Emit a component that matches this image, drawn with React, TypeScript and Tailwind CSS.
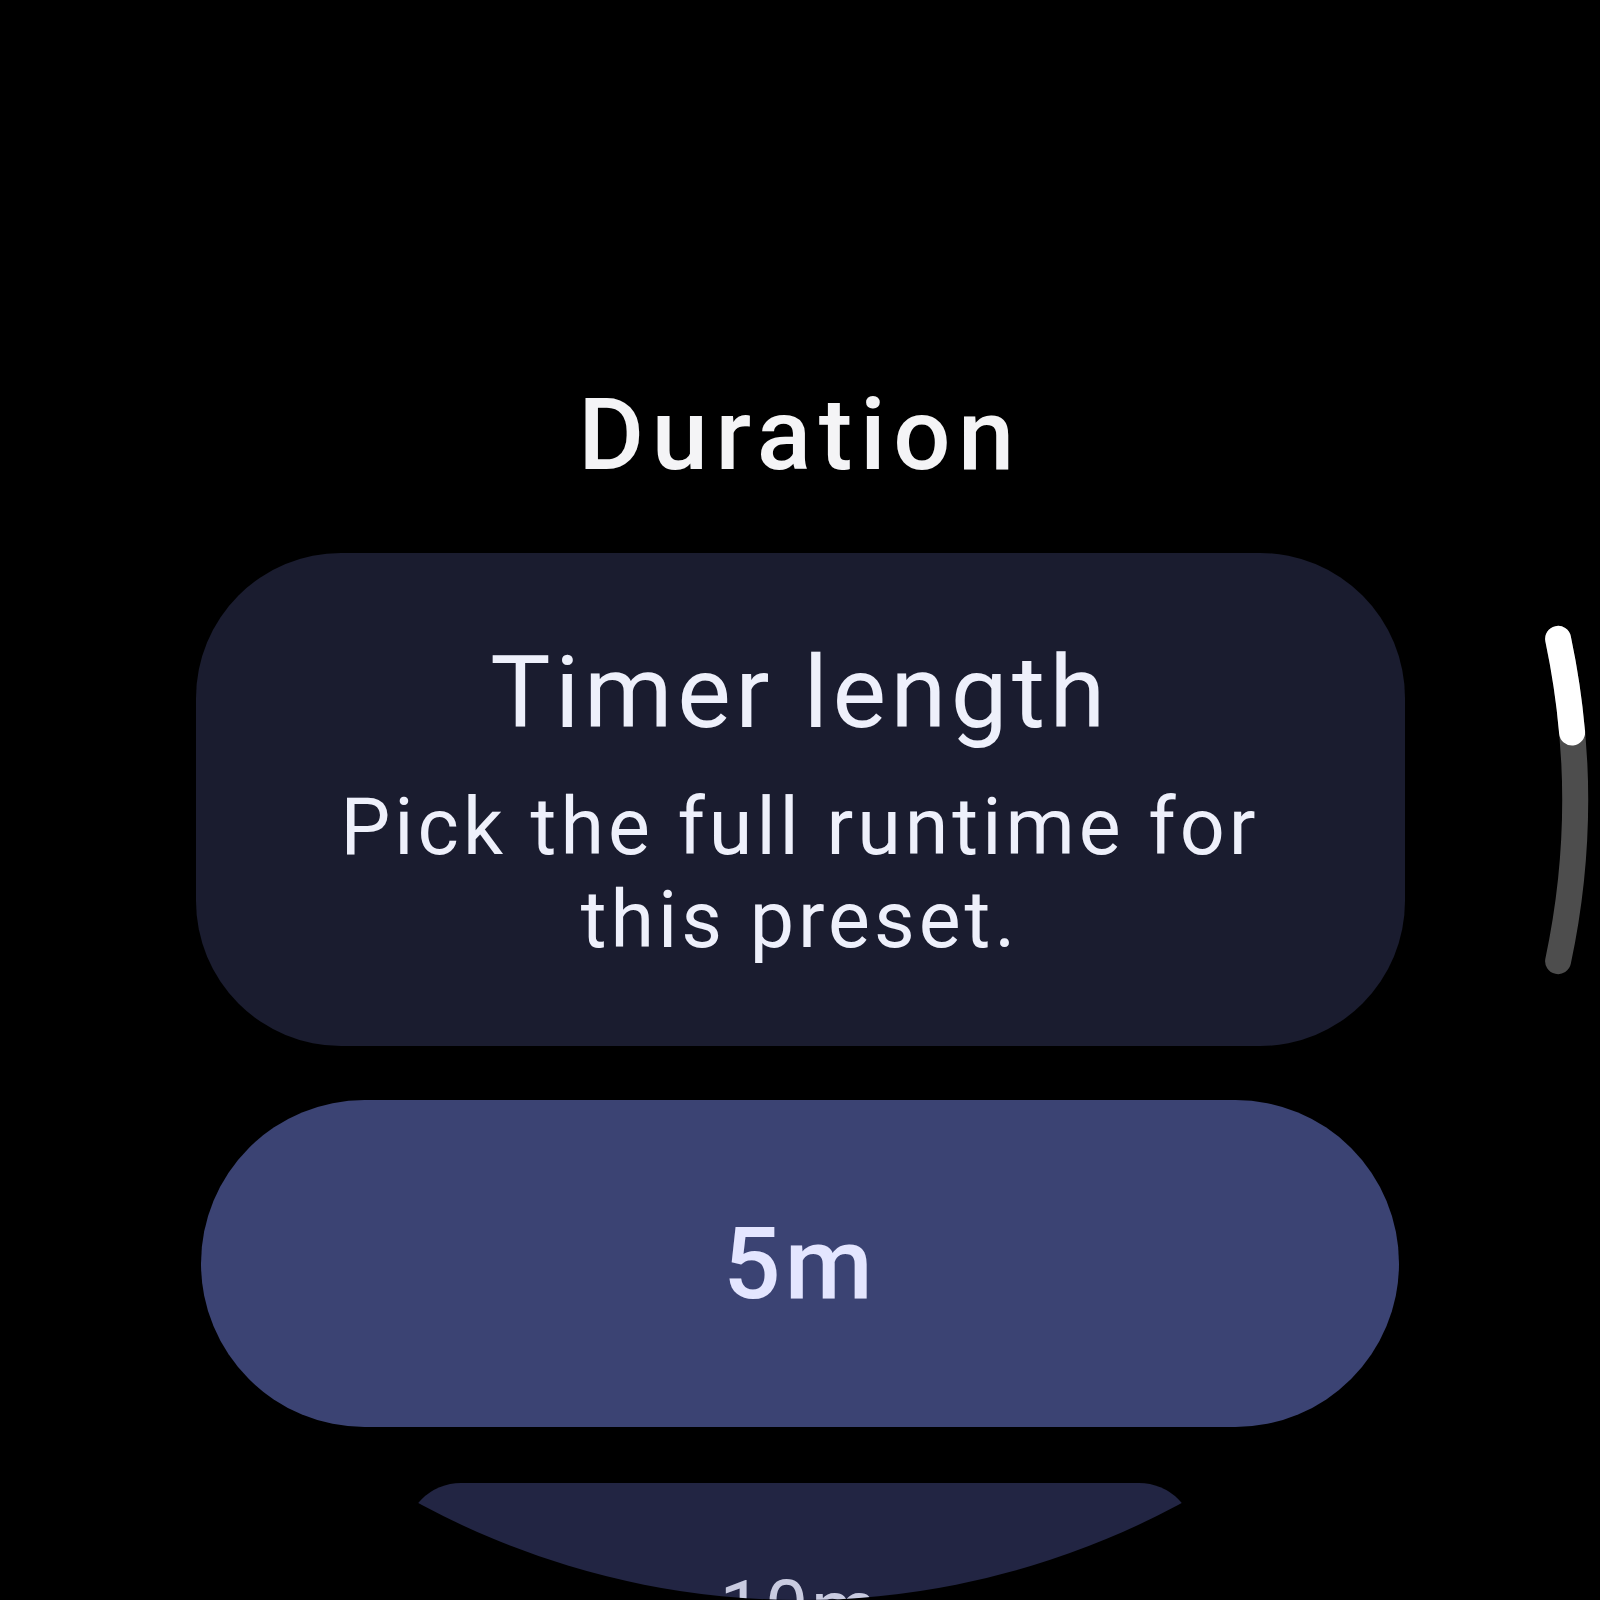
export default function App() {
    return (
        <div className="w-[1600px] h-[1600px] bg-black" style={{ fontFamily: 'Roboto, "Noto Sans", sans-serif' }}>
            <div className="relative w-[1600px] h-[1600px] rounded-full overflow-hidden bg-black">
                <div className="flex flex-col items-center pt-[375px]">
                    <h1 className="text-[101px] leading-[120px] font-medium tracking-[7.5px] text-[#f4f4f6]">Duration</h1>

                    <div className="mt-[58px] w-[1209px] h-[493px] rounded-[145px] bg-[#1a1c2f] flex flex-col items-center justify-center gap-[28px] px-[100px] text-center">
                        <p className="text-[101px] leading-[120px] tracking-[4.5px] text-[#eef0fb]">Timer length</p>
                        <p className="text-[79px] leading-[93px] tracking-[4px] text-[#eef0fb]">Pick the full runtime for this preset.</p>
                    </div>

                    <button className="mt-[54px] w-[1198px] h-[327px] rounded-full bg-[#3b4373] flex items-center justify-center">
                        <span className="text-[101px] leading-[120px] font-medium tracking-[4px] text-[#e4e6ff]">5m</span>
                    </button>

                    <button className="mt-[56px] w-[790px] h-[300px] rounded-[56px] bg-[#222543] flex justify-center pt-[80px]">
                        <span className="text-[76px] leading-[90px] tracking-[3px] text-[#c9cbe0]">10m</span>
                    </button>
                </div>

                {/* curved scroll indicator */}
                <svg className="absolute inset-0" width="1600" height="1600" viewBox="0 0 1600 1600">
                    <path d="M 1558.1 638.9 A 775 775 0 0 1 1558.1 961.1" stroke="#4d4d4d" strokeWidth="26" strokeLinecap="round" fill="none" />
                    <path d="M 1558.1 638.9 A 775 775 0 0 1 1572.1 732.5" stroke="#ffffff" strokeWidth="26" strokeLinecap="round" fill="none" />
                </svg>
            </div>
        </div>
    );
}
